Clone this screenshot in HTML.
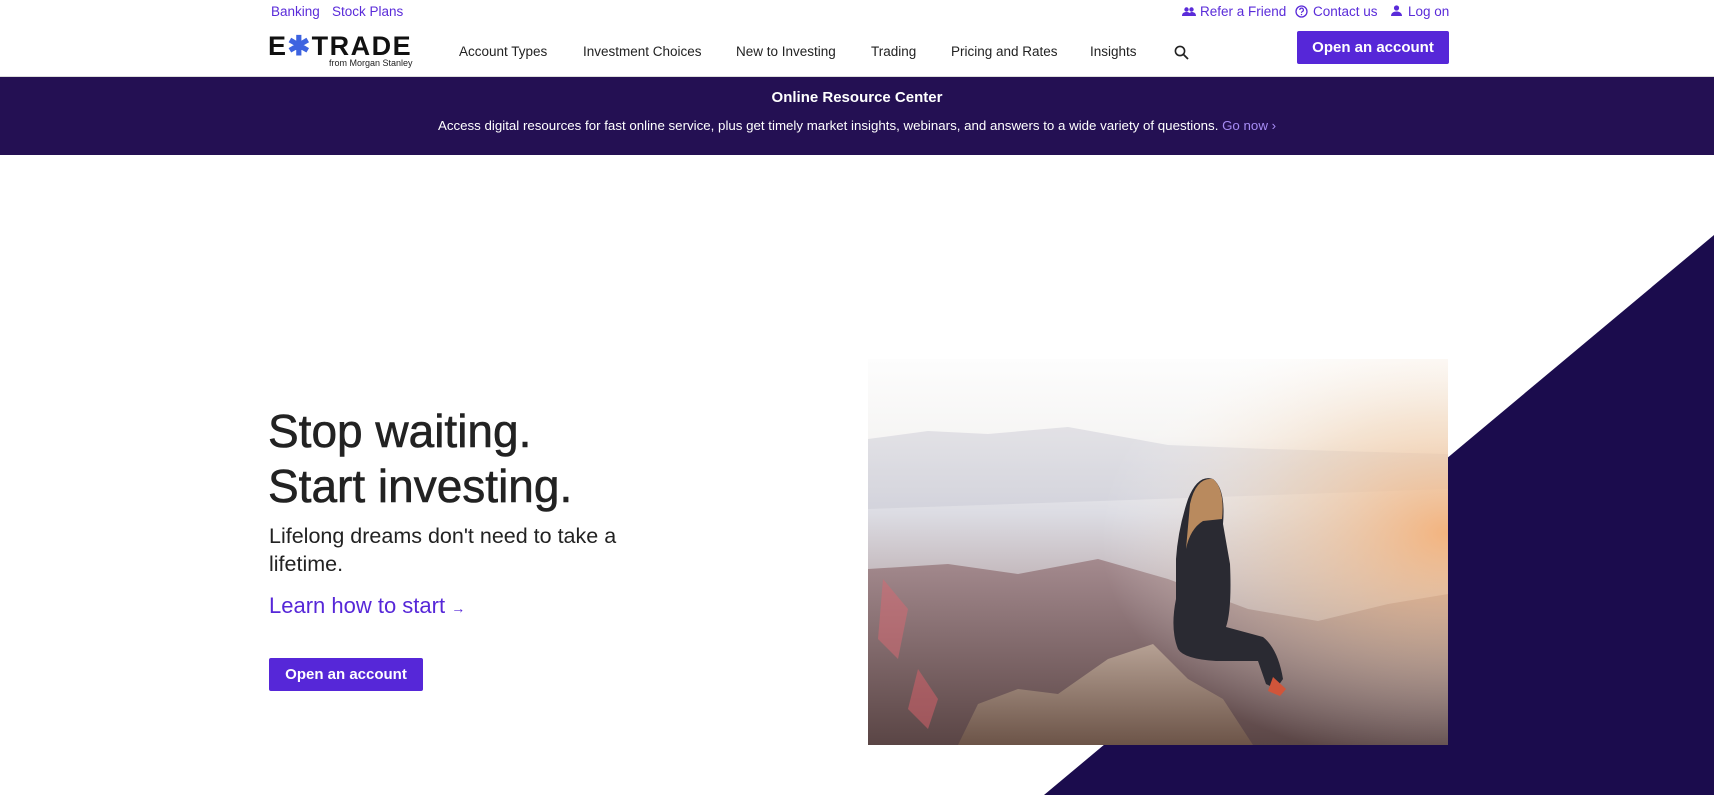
<!DOCTYPE html>
<html><head><meta charset="utf-8"><style>
*{margin:0;padding:0;box-sizing:border-box}
body{width:1714px;height:795px;overflow:hidden;background:#fff;font-family:"Liberation Sans",sans-serif;position:relative;color:#222}
.a{position:absolute;white-space:nowrap}
.top{font-size:13.5px;color:#5a2bd9;top:4px}
.nav{font-size:13.5px;color:#222;top:44px}
.btn{background:#5627d8;color:#fff;font-weight:bold;border-radius:2px;display:flex;align-items:center;justify-content:center}
</style></head><body>
<div class="a top" style="left:271px">Banking</div>
<div class="a top" style="left:332px">Stock Plans</div>
<svg class="a" style="left:1182px;top:6px" width="14" height="12" viewBox="0 0 14 12"><circle cx="4.5" cy="3.5" r="2.2" fill="#5a2bd9"/><circle cx="9.5" cy="3.5" r="2.2" fill="#5a2bd9"/><path d="M0 10c0-3 2-4 4.5-4s4.5 1 4.5 4zM7 10c0-2 1-3.8 2.5-4 2.5 0 4.5 1 4.5 4z" fill="#5a2bd9"/></svg>
<div class="a top" style="left:1200px">Refer a Friend</div>
<svg class="a" style="left:1295px;top:5px" width="13" height="13" viewBox="0 0 13 13"><circle cx="6.5" cy="6.5" r="5.5" fill="none" stroke="#5a2bd9" stroke-width="1.3"/><path d="M4.8 5a1.8 1.8 0 1 1 2.4 1.6c-.6.3-.7.6-.7 1.3" fill="none" stroke="#5a2bd9" stroke-width="1.2"/><circle cx="6.5" cy="9.6" r=".7" fill="#5a2bd9"/></svg>
<div class="a top" style="left:1313px">Contact us</div>
<svg class="a" style="left:1391px;top:5px" width="11" height="12" viewBox="0 0 11 12"><circle cx="5.5" cy="3" r="2.6" fill="#5a2bd9"/><path d="M0 11c0-3 2.5-4.5 5.5-4.5S11 8 11 11z" fill="#5a2bd9"/></svg>
<div class="a top" style="left:1408px">Log on</div>

<div class="a" style="left:268px;top:33px;font-size:27px;font-weight:bold;letter-spacing:1.5px;color:#111;line-height:27px">E<span style="color:#3d63e0">✱</span>TRADE</div>
<div class="a" style="left:329px;top:58px;font-size:9px;color:#222">from Morgan Stanley</div>

<div class="a nav" style="left:459px">Account Types</div>
<div class="a nav" style="left:583px">Investment Choices</div>
<div class="a nav" style="left:736px">New to Investing</div>
<div class="a nav" style="left:871px">Trading</div>
<div class="a nav" style="left:951px">Pricing and Rates</div>
<div class="a nav" style="left:1090px">Insights</div>
<svg class="a" style="left:1174px;top:45px" width="15" height="15" viewBox="0 0 15 15"><circle cx="6" cy="6" r="4.6" fill="none" stroke="#222" stroke-width="1.6"/><path d="M9.5 9.5l4.5 4.5" stroke="#222" stroke-width="1.8"/></svg>
<div class="a btn" style="left:1297px;top:31px;width:152px;height:33px;font-size:15px">Open an account</div>

<div class="a" style="left:0;top:76px;width:1714px;height:1px;background:#ddd"></div>
<div class="a" style="left:0;top:77px;width:1714px;height:78px;background:#241053;color:#fff;text-align:center">
<div style="font-weight:bold;font-size:15px;margin-top:12px">Online Resource Center</div>
<div style="font-size:13.3px;margin-top:12px">Access digital resources for fast online service, plus get timely market insights, webinars, and answers to a wide variety of questions. <span style="color:#a78cf5">Go now ›</span></div>
</div>

<svg class="a" style="left:0;top:0" width="1714" height="795"><polygon points="1714,235 1714,795 1044,795" fill="#1b0c4d"/></svg>

<svg class="a" style="left:868px;top:359px" width="580" height="386" viewBox="0 0 580 386">
<defs>
<linearGradient id="sky" x1="0" y1="0" x2="0" y2="1"><stop offset="0" stop-color="#fdfdfd"/><stop offset=".2" stop-color="#f6f5f4"/><stop offset=".4" stop-color="#dcdce3"/><stop offset=".55" stop-color="#c6bcc0"/><stop offset="1" stop-color="#6e5454"/></linearGradient>
<radialGradient id="sun" cx="1" cy=".45" r=".6"><stop offset="0" stop-color="#f5b27a" stop-opacity=".95"/><stop offset=".5" stop-color="#f3d2b0" stop-opacity=".5"/><stop offset="1" stop-color="#fff" stop-opacity="0"/></radialGradient>
<linearGradient id="mt" x1="0" y1="0" x2="0" y2="1"><stop offset="0" stop-color="#a48a8e"/><stop offset="1" stop-color="#5a4545"/></linearGradient>
<linearGradient id="rk" x1="0" y1="0" x2="0" y2="1"><stop offset="0" stop-color="#b6a194"/><stop offset="1" stop-color="#6c5448"/></linearGradient>
</defs>
<rect width="580" height="386" fill="url(#sky)"/>
<path d="M0 80 L60 72 L120 75 L200 68 L300 86 L400 90 L580 95 L580 130 L0 150Z" fill="#c7c8d3" opacity=".45"/>
<path d="M0 210 L80 205 L150 215 L230 200 L300 220 L380 250 L450 262 L520 245 L580 235 L580 386 L0 386Z" fill="url(#mt)"/>
<rect width="580" height="386" fill="url(#sun)"/>
<path d="M15 220 L40 250 L30 300 L10 280Z" fill="#d36a72" opacity=".55"/>
<path d="M50 310 L70 340 L60 370 L40 350Z" fill="#d3606a" opacity=".55"/>
<path d="M90 386 L110 345 L150 330 L190 335 L240 300 L285 285 L320 320 L355 340 L385 386Z" fill="url(#rk)"/>
<path d="M320 140 Q330 115 345 120 Q358 130 355 165 L362 205 Q364 250 358 268 L395 278 Q410 290 415 320 L408 330 L398 325 L390 302 L348 302 Q316 300 310 290 Q302 270 308 240 L308 200 Q310 170 320 140Z" fill="#2a2a32"/>
<path d="M322 145 Q328 118 345 120 Q357 130 354 160 L335 162 Q322 170 318 190Z" fill="#b98a5e"/>
<path d="M405 318 L418 330 L412 337 L400 332Z" fill="#d0553a"/>
</svg>

<div class="a" style="left:268px;top:404px;font-size:46px;line-height:55px;color:#222;-webkit-text-stroke:0.6px #222">Stop waiting.<br>Start investing.</div>
<div class="a" style="left:269px;top:522px;font-size:21.5px;line-height:28px;color:#222">Lifelong dreams don't need to take a<br>lifetime.</div>
<div class="a" style="left:269px;top:593px;font-size:22px;color:#5627d8">Learn how to start <span style="font-size:14px">→</span></div>
<div class="a btn" style="left:269px;top:658px;width:154px;height:33px;font-size:15px">Open an account</div>
</body></html>
